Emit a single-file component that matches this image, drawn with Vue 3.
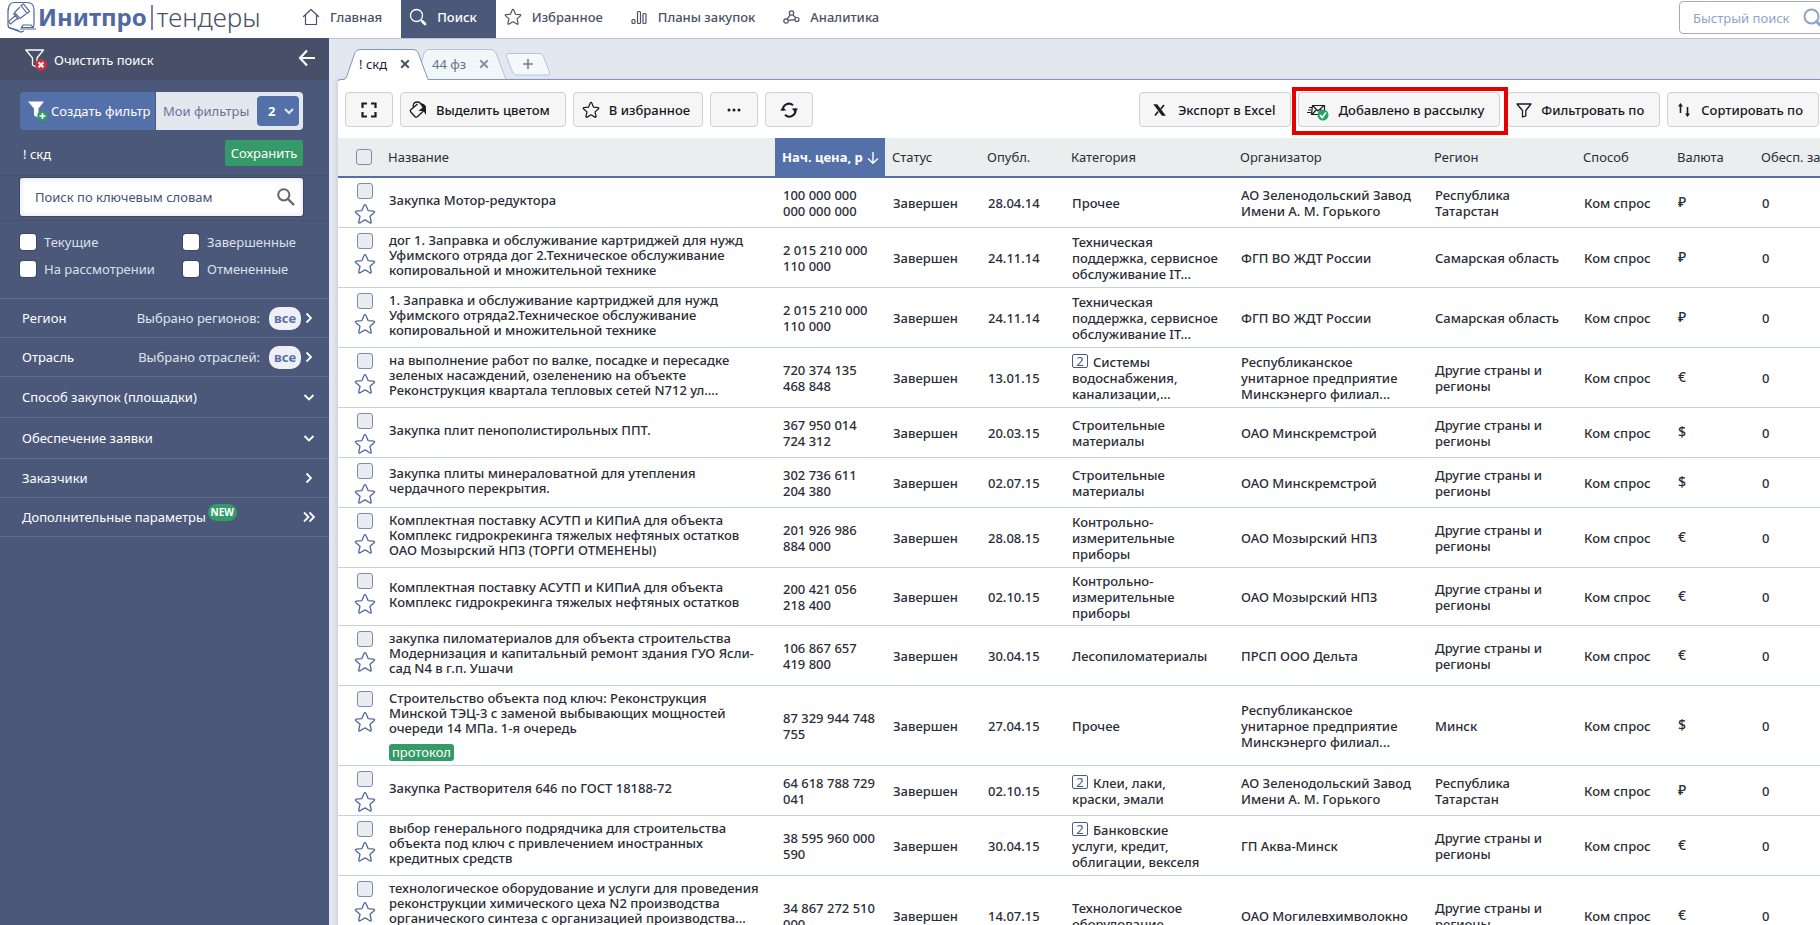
<script setup>
import { ref } from 'vue'

const star = 'M10 1.500q.6 0 .9.800l1.900 4.600 5 .5q1.500.3.400 1.400l-3.700 3.300 1.100 5q.1 1.400-1.200.8L10 15.300l-4.400 2.600q-1.300.6-1.200-.8l1.100-5L1.800 8.800q-1.100-1.100.4-1.400l5-.5 1.900-4.600q.3-.8.900-.8z'

const quickSearch = ref('')
const keywords = ref('')
const statuses = ['Текущие', 'Завершенные', 'На рассмотрении', 'Отмененные']

const groups = [
  { title: 'Регион', note: 'Выбрано регионов:', icon: 'right' },
  { title: 'Отрасль', note: 'Выбрано отраслей:', icon: 'right' },
  { title: 'Способ закупок (площадки)', icon: 'down', tall: true },
  { title: 'Обеспечение заявки', icon: 'down', tall: true },
  { title: 'Заказчики', icon: 'right' },
  { title: 'Дополнительные параметры', icon: 'double', fresh: true }
]

const headers = ['Статус', 'Опубл.', 'Категория', 'Организатор', 'Регион', 'Способ', 'Валюта', 'Обесп. заявки']

const other = 'Другие страны и\nрегионы'
const tatar = 'Республика\nТатарстан'
const zelen = 'АО Зеленодольский Завод\nИмени А. М. Горького'
const energo = 'Республиканское\nунитарное предприятие\nМинскэнерго филиал...'
const tech = 'Техническая\nподдержка, сервисное\nобслуживание IT...'
const control = 'Контрольно-\nизмерительные\nприборы'

const rows = [
  { name: 'Закупка Мотор-редуктора', price: '100 000 000\n000 000 000', date: '28.04.14', cat: 'Прочее', org: zelen, region: tatar, cur: '₽' },
  { name: 'дог 1. Заправка и обслуживание картриджей для нужд\nУфимского отряда дог 2.Техническое обслуживание\nкопировальной и множительной технике', price: '2 015 210 000\n110 000', date: '24.11.14', cat: tech, org: 'ФГП ВО ЖДТ России', region: 'Самарская область', cur: '₽' },
  { name: '1. Заправка и обслуживание картриджей для нужд\nУфимского отряда2.Техническое обслуживание\nкопировальной и множительной технике', price: '2 015 210 000\n110 000', date: '24.11.14', cat: tech, org: 'ФГП ВО ЖДТ России', region: 'Самарская область', cur: '₽' },
  { name: 'на выполнение работ по валке, посадке и пересадке\nзеленых насаждений, озеленению на объекте\nРеконструкция квартала тепловых сетей N712 ул....', price: '720 374 135\n468 848', date: '13.01.15', count: 2, cat: 'Системы\nводоснабжения,\nканализации,...', org: energo, region: other, cur: '€' },
  { name: 'Закупка плит пенополистирольных ППТ.', price: '367 950 014\n724 312', date: '20.03.15', cat: 'Строительные\nматериалы', org: 'ОАО Минскремстрой', region: other, cur: '$' },
  { name: 'Закупка плиты минераловатной для утепления\nчердачного перекрытия.', price: '302 736 611\n204 380', date: '02.07.15', cat: 'Строительные\nматериалы', org: 'ОАО Минскремстрой', region: other, cur: '$' },
  { name: 'Комплектная поставку АСУТП и КИПиА для объекта\nКомплекс гидрокрекинга тяжелых нефтяных остатков\nОАО Мозырский НПЗ (ТОРГИ ОТМЕНЕНЫ)', price: '201 926 986\n884 000', date: '28.08.15', cat: control, org: 'ОАО Мозырский НПЗ', region: other, cur: '€' },
  { name: 'Комплектная поставку АСУТП и КИПиА для объекта\nКомплекс гидрокрекинга тяжелых нефтяных остатков', price: '200 421 056\n218 400', date: '02.10.15', cat: control, org: 'ОАО Мозырский НПЗ', region: other, cur: '€' },
  { name: 'закупка пиломатериалов для объекта строительства\nМодернизация и капитальный ремонт здания ГУО Ясли-\nсад N4 в г.п. Ушачи', price: '106 867 657\n419 800', date: '30.04.15', cat: 'Лесопиломатериалы', org: 'ПРСП ООО Дельта', region: other, cur: '€' },
  { name: 'Строительство объекта под ключ: Реконструкция\nМинской ТЭЦ-3 с заменой выбывающих мощностей\nочереди 14 МПа. 1-я очередь', tag: 'протокол', price: '87 329 944 748\n755', date: '27.04.15', cat: 'Прочее', org: energo, region: 'Минск', cur: '$' },
  { name: 'Закупка Растворителя 646 по ГОСТ 18188-72', price: '64 618 788 729\n041', date: '02.10.15', count: 2, cat: 'Клеи, лаки,\nкраски, эмали', org: zelen, region: tatar, cur: '₽' },
  { name: 'выбор генерального подрядчика для строительства\nобъекта под ключ с привлечением иностранных\nкредитных средств', price: '38 595 960 000\n590', date: '30.04.15', count: 2, cat: 'Банковские\nуслуги, кредит,\nоблигации, векселя', org: 'ГП Аква-Минск', region: other, cur: '€' },
  { name: 'технологическое оборудование и услуги для проведения\nреконструкции химического цеха N2 производства\nорганического синтеза с организацией производства...', tag: 'протокол', price: '34 867 272 510\n000', date: '14.07.15', cat: 'Технологическое\nоборудование', org: 'ОАО Могилевхимволокно', region: other, cur: '€' }
]
</script>

<template>
  <div class="app">
    <header class="top">
      <a href="#" class="logo">
        <svg class="logo-mark" viewBox="0 0 30 32" fill="none" stroke="#4f66a0" stroke-width="1.2">
          <path d="M7 1.500h13q7 0 7 7v15q0 2-2 3M1 7.500V24q0 3 3 3.500l10 3.500 3-1M1 11l1-6q1-3 5-3.500" />
          <path d="M14 4.500l2.500-1.500 6 7.500-2.500 2zM13 6L7.500 11.500l5.500 6 6-4.500M6.500 12.500l5 6M8.500 14.500L1.500 20.500l2 2.500 7.500-6" />
          <path d="M14.500 26.500l1.500-2.500h8l2 2.500zM13 28h16M2 26.500l10 3" />
        </svg>
        <span class="logo-bold">Инитпро</span><span class="logo-bar"></span><span class="logo-thin">тендеры</span>
      </a>
      <nav class="nav">
        <a href="#">
          <svg class="i18" viewBox="0 0 18 18" fill="none" stroke="currentColor" stroke-width="1.2"><path d="M1.500 8.500L9 1.500l7.500 7M3.500 7v9.500h11V7" stroke-linejoin="round" stroke-linecap="round" /></svg>
          Главная
        </a>
        <a href="#" class="on">
          <svg class="i18" viewBox="0 0 18 18" fill="none" stroke="currentColor"><circle cx="7.500" cy="7.500" r="6" stroke-width="1.300" /><path d="M12 12l2 2" stroke-width="1.300" /><path d="M13.500 13.500l2.500 2.500" stroke-width="2.800" stroke-linecap="round" /></svg>
          Поиск
        </a>
        <a href="#">
          <svg class="i18" viewBox="0 0 20 20" fill="none" stroke="currentColor" stroke-width="1.300" stroke-linejoin="round"><path :d="star" /></svg>
          Избранное
        </a>
        <a href="#">
          <svg class="i18" viewBox="0 0 18 18" fill="none" stroke="currentColor" stroke-width="1.200"><rect x="2" y="11.500" width="3" height="4" rx="1" /><rect x="7.500" y="3.500" width="3" height="12" rx="1" /><rect x="13" y="5.500" width="3" height="10" rx="1" /></svg>
          Планы закупок
        </a>
        <a href="#">
          <svg class="i18" viewBox="0 0 18 18" fill="none" stroke="currentColor" stroke-width="1.200"><circle cx="4" cy="13" r="2.200" /><circle cx="9.500" cy="5" r="2.200" /><circle cx="15" cy="11.500" r="2" /><path d="M5.200 11.200l3-4.300M10.900 6.800l2.900 3.200M6.200 12.300l6.800-.700" /></svg>
          Аналитика
        </a>
      </nav>
      <div class="quick">
        <input v-model="quickSearch" type="text" aria-label="Быстрый поиск" placeholder="Быстрый поиск" />
        <svg class="quick-icon" viewBox="0 0 20 20" fill="none" stroke="#8ea3cd" stroke-width="2"><circle cx="8.500" cy="8.500" r="7" /><path d="M13.500 13.500l4 4" stroke-width="3" stroke-linecap="round" /></svg>
      </div>
    </header>

    <div class="main">
      <aside class="side">
        <div class="side-head">
          <button class="clear" type="button">
            <svg class="i22" viewBox="0 0 22 22" fill="none"><path d="M.8 1h17.700l-6.500 8v9.500L7.500 16V9z" stroke="#fff" stroke-width="1.300" stroke-linejoin="round" /><circle cx="16" cy="15.800" r="5.800" fill="#d02f3d" /><path d="M13.600 13.400l4.800 4.800M18.400 13.400l-4.800 4.800" stroke="#fff" stroke-width="2" /></svg>
            Очистить поиск
          </button>
          <button class="back" type="button" aria-label="Свернуть">
            <svg class="i18" viewBox="0 0 18 18" fill="none" stroke="#fff" stroke-width="2.200"><path d="M17 9H2.500M9 1.500L2 9l7 7.500" /></svg>
          </button>
        </div>

        <div class="filters">
          <button class="create" type="button">
            <svg class="i22" viewBox="0 0 22 22"><path d="M1 1.500h16l-5.500 7V18L7 15.500v-7z" fill="#fff" /><circle cx="15.500" cy="16" r="5.300" fill="#2f9a66" /><path d="M12.500 16h6M15.500 13v6" stroke="#fff" stroke-width="1.700" /></svg>
            Создать фильтр
          </button>
          <button class="mine" type="button">
            Мои фильтры
            <span class="chip">2 <svg class="i8" viewBox="0 0 8 8" fill="none" stroke="#dde4f2" stroke-width="2"><path d="M0 2l4 4 4-4" /></svg></span>
          </button>
        </div>

        <div class="current">
          <span>! скд</span>
          <button class="save" type="button">Сохранить</button>
        </div>

        <div class="keywords">
          <input v-model="keywords" type="text" aria-label="Ключевые слова" placeholder="Поиск по ключевым словам" />
          <svg class="key-icon" viewBox="0 0 18 18" fill="none" stroke="#666" stroke-width="2"><circle cx="6.800" cy="6.800" r="5.600" /><path d="M11 11l6 6" stroke-width="2.400" /></svg>
        </div>

        <div class="states">
          <label v-for="s in statuses" :key="s"><input type="checkbox" />{{ s }}</label>
        </div>

        <div class="groups">
          <button v-for="g in groups" :key="g.title" class="group" :class="{ tall: g.tall }" type="button">
            <span>{{ g.title }}</span>
            <sup v-if="g.fresh" class="new">NEW</sup>
            <span v-if="g.note" class="note">{{ g.note }}</span>
            <span v-if="g.note" class="all">все</span>
            <svg class="chev" :class="{ solo: !g.note }" viewBox="0 0 12 12" fill="none" stroke="#fff" stroke-width="1.800">
              <path v-if="g.icon === 'right'" d="M3.500 1.500L8 6l-4.500 4.500" />
              <path v-else-if="g.icon === 'down'" d="M1.500 4L6 8.500 10.500 4" />
              <path v-else d="M1 1.500L5.500 6 1 10.500M6.500 1.500L11 6l-4.500 4.500" />
            </svg>
          </button>
        </div>
      </aside>

      <section class="work">
        <div class="tabs">
          <svg class="tab-shape" viewBox="0 0 220 42">
            <path d="M85 40.500L92 14q1.500-3.500 5-3.500h62q3.500 0 5 3.500l10 26.500" fill="#f1f6f9" stroke="#b3c3da" />
            <path d="M6 42v-1.500h5q2.500 0 3.500-2.500L23 13.500q1.500-3 5-3h53q4 0 5 3l10 27V42z" fill="#fff" />
            <path d="M6 42q1-1.500 3-1.500h2q2.500 0 3.500-2.500L23 13.500q1.500-3 5-3h53q4 0 5 3l10 27h124" fill="none" stroke="#7f96bf" />
            <path d="M174.500 17.500q-1-3 2-3h31q3 0 4 3l6 15.500q1 3-2 3h-31q-3 0-4-3z" fill="#f5f8fb" stroke="#b3c3e0" />
          </svg>
          <div class="tab-items">
            <button type="button" class="tab">! скд</button>
            <button type="button" class="x" aria-label="Закрыть ! скд"><svg class="i8" viewBox="0 0 8 8" stroke="currentColor" stroke-width="2"><path d="M.2.2l7.600 7.600M7.800.2L.2 7.800" /></svg></button>
            <button type="button" class="tab dim second">44 фз</button>
            <button type="button" class="x dim" aria-label="Закрыть 44 фз"><svg class="i8" viewBox="0 0 8 8" stroke="currentColor" stroke-width="2"><path d="M.2.2l7.600 7.600M7.800.2L.2 7.800" /></svg></button>
            <button type="button" class="x add" aria-label="Новая вкладка"><svg class="i10" viewBox="0 0 10 10" stroke="#777b84" stroke-width="1.600"><path d="M5 0v10M0 5h10" /></svg></button>
          </div>
        </div>

        <div class="panel">
          <div class="tools">
            <button type="button" class="sq" aria-label="Во весь экран"><svg class="i16" viewBox="0 0 16 16" fill="none" stroke="#1b1d22" stroke-width="2.200"><path d="M1.500 6V1.500H6M10 1.500h4.500V6M14.500 10v4.500H10M6 14.500H1.500V10" /></svg></button>
            <button type="button">
              <svg class="i18" viewBox="0 0 18 18" fill="none" stroke="#1b1d22" stroke-width="1.300"><path d="M8.500 3L1.800 8.700q-1.200 1.100 0 2.300l4 4.500q1.200 1.200 2.500.2l6.200-5.700" /><path d="M4.300 6.300V4.500q0-3.500 4-3.500 2 0 3 1" /><path d="M10 1.500q6.500 1 7 4.500v8l-2.500-4H9.500l4-3.500z" fill="#1b1d22" stroke="none" /></svg>
              Выделить цветом
            </button>
            <button type="button" class="fav">
              <svg class="i18" viewBox="0 0 20 20" fill="none" stroke="#1b1d22" stroke-width="1.400" stroke-linejoin="round"><path :d="star" /></svg>
              В избранное
            </button>
            <button type="button" class="sq" aria-label="Ещё"><svg class="i14" viewBox="0 0 14 14" fill="#1b1d22"><circle cx="2" cy="7" r="1.500" /><circle cx="7" cy="7" r="1.500" /><circle cx="12" cy="7" r="1.500" /></svg></button>
            <button type="button" class="sq" aria-label="Обновить"><svg class="i18" viewBox="0 0 18 18" fill="none" stroke="#1b1d22" stroke-width="2"><path d="M3 9.500a6 6 0 0 1 10-5.200M15 7.500a6 6 0 0 1-10 6.200" /><path d="M0 9.500h6.200L3 6zM18 7.500h-6.200L15 11.500z" fill="#1b1d22" stroke="none" /></svg></button>

            <button type="button" class="push">
              <svg class="i18" viewBox="0 0 18 18" fill="none" stroke="#1b1d22"><path d="M4 4h1.800l7.400 10h-1.800z" stroke-width="1.700" /><path d="M13 4L9.800 8M7.200 10.500L4 14.500" stroke-width="1.700" /></svg>
              Экспорт в Excel
            </button>
            <span class="marked">
              <button type="button">
                <svg class="i22" viewBox="0 0 22 22" fill="none" stroke="#1b1d22"><path d="M5.500 6.500h12v9h-13zM5.500 6.500l5.500 5.500 6-5.500M5 15.500l4.500-5M16.500 15.500l-3-5" stroke-width="1.200" /><path d="M2 8.500h3M1 11h3.500M0 13.500h4" /><circle cx="16" cy="16" r="5.500" fill="#27a06a" stroke="none" /><path d="M13 16l2.200 2.500L19 13.500" stroke="#fff" stroke-width="1.800" /></svg>
                Добавлено в рассылку
              </button>
            </span>
            <button type="button">
              <svg class="i16" viewBox="0 0 16 16" fill="none" stroke="#1b1d22" stroke-width="1.300" stroke-linejoin="round"><path d="M1 2h14L9.800 8.500v5.300L6.500 15V8.500z" /></svg>
              Фильтровать по
            </button>
            <button type="button">
              <svg class="i16" viewBox="0 0 16 16" fill="none" stroke="#1b1d22" stroke-width="1.600"><path d="M4.500 11V2.500M11.500 5v8.500" /><path d="M2 4.500L4.500 1 7 4.500zM9 11.500l2.500 3.500 2.500-3.500z" fill="#1b1d22" stroke="none" /></svg>
              Сортировать по
            </button>
          </div>

          <table class="grid">
            <colgroup>
              <col class="c-check" /><col class="c-name" /><col class="c-price" /><col class="c-status" /><col class="c-date" /><col class="c-cat" /><col class="c-org" /><col class="c-region" /><col class="c-way" /><col class="c-cur" /><col />
            </colgroup>
            <thead>
              <tr>
                <th class="check"><input type="checkbox" aria-label="Выбрать все" /></th>
                <th>Название</th>
                <th class="price">Нач. цена, р <svg class="i12" viewBox="0 0 12 12" fill="none" stroke="#fff" stroke-width="1.400"><path d="M6 0v11M1 6.500l5 4.700 5-4.700" /></svg></th>
                <th v-for="h in headers" :key="h">{{ h }}</th>
              </tr>
            </thead>
            <tbody>
              <tr v-for="(r, i) in rows" :key="i">
                <td class="check">
                  <div class="marks">
                    <input type="checkbox" :aria-label="'Выбрать: ' + r.name" />
                    <button type="button" :aria-label="'В избранное: ' + r.name"><svg class="i20" viewBox="1 1 18 18" fill="none" stroke="#54699f" stroke-width="1.200" stroke-linejoin="round"><path :d="star" /></svg></button>
                  </div>
                </td>
                <td class="name" :class="{ tagged: r.tag }">{{ r.name }}<div v-if="r.tag"><span class="tag">{{ r.tag }}</span></div></td>
                <td>{{ r.price }}</td>
                <td>Завершен</td>
                <td>{{ r.date }}</td>
                <td><span v-if="r.count" class="count">{{ r.count }}</span>{{ r.cat }}</td>
                <td>{{ r.org }}</td>
                <td>{{ r.region }}</td>
                <td>Ком спрос</td>
                <td class="cur">{{ r.cur }}</td>
                <td>0</td>
              </tr>
            </tbody>
          </table>
        </div>
      </section>
    </div>
  </div>
</template>

<style>
body { overflow: hidden; }
</style>

<style scoped>
.app { height: 100vh; display: flex; flex-direction: column; overflow: hidden; background: #e3e7ef; color: #2a2d36; font: 13px/16px "Noto Sans", "Open Sans", sans-serif; }
.app *, .app *::before, .app *::after { box-sizing: border-box; }
button, input { font: inherit; color: inherit; margin: 0; }
button { border: 0; padding: 0; background: none; display: flex; align-items: center; white-space: nowrap; }
svg { display: block; flex: none; overflow: visible; }
.i8 { width: 8px; height: 8px; }
.i10 { width: 10px; height: 10px; }
.i12 { width: 12px; height: 12px; }
.i14 { width: 14px; height: 14px; }
.i16 { width: 16px; height: 16px; }
.i18 { width: 18px; height: 18px; }
.i20 { width: 20px; height: 20px; }
.i22 { width: 22px; height: 22px; }

.top { flex: none; height: 38px; display: flex; background: #fff; overflow: hidden; }
.logo { width: 294px; padding-left: 7px; display: flex; align-items: center; text-decoration: none; font-size: 24px; line-height: 34px; color: #4b5167; height: 34px; }
.logo-mark { width: 30px; height: 32px; }
.logo-bold { margin-left: 1px; font-weight: 700; color: #5069a3; }
.logo-bar { width: 2px; height: 25px; margin: 0 4px; background: #7b829a; }
.logo-thin { font-size: 26px; font-weight: 300; }
.nav { display: flex; font-weight: 500; }
.nav a { display: flex; align-items: center; gap: 10px; padding: 0 19px 4px 8px; color: #4a5068; text-decoration: none; }
.nav a.on { background: #4c5879; color: #fff; }
.quick { flex: none; position: relative; width: 161px; height: 33px; margin: 1px -20px 0 auto; }
.quick input { width: 100%; height: 33px; border: 1px solid #a3acc6; border-radius: 4px; padding: 0 40px 0 13px; background: #fff; outline: 0; }
.quick input::placeholder { color: #8ea3cd; opacity: 1; }
.quick-icon { position: absolute; left: 124px; top: 7px; width: 20px; height: 20px; }

.main { flex: 1; min-height: 0; display: flex; }
.side { flex: none; width: 329px; background: #4c5879; color: #fff; }
.side-head { height: 42px; padding: 0 13px 2px 25px; display: flex; justify-content: space-between; align-items: center; background: #485069; }
.clear { gap: 7px; padding-top: 3px; }
.filters { margin: 12px 26px 0 20px; height: 38px; display: flex; border-radius: 4px; overflow: hidden; }
.create { width: 135px; padding-left: 7px; gap: 2px; background: #5470a9; }
.mine { flex: 1; margin-left: 1px; padding: 0 4px 0 7px; justify-content: space-between; background: #e3e8ef; color: #66749a; }
.chip { width: 42px; height: 30px; padding: 0 6px 0 11px; display: flex; align-items: center; justify-content: space-between; border-radius: 4px; background: #5470a9; color: #fff; font-weight: 700; }
.current { height: 46px; padding: 10px 26px 0 23px; display: flex; justify-content: space-between; align-items: flex-start; line-height: 28px; border-bottom: 1px solid #485270; }
.save { height: 26px; width: 78px; justify-content: center; border-radius: 2px; background: #349a67; }
.keywords { position: relative; height: 45px; padding: 2px 26px 0 20px; border-bottom: 1px solid #485270; }
.keywords input { width: 100%; height: 38px; padding: 0 40px 0 15px; border: 0; border-radius: 3px; background: #fff; box-shadow: 0 0 0 1px #3c4660, inset 0 0 6px #dde1ea; outline: 0; }
.keywords input::placeholder { color: #44527a; opacity: 1; }
.key-icon { position: absolute; right: 34px; top: 12px; width: 18px; height: 18px; }
.states { height: 77px; padding: 12px 20px 0; display: grid; grid-template-columns: 163px 1fr; grid-auto-rows: 27px; color: #dbe0ea; }
.states label { display: flex; gap: 8px; height: 18px; align-items: center; }
.states input { appearance: none; width: 16px; height: 16px; border-radius: 3px; background: #fff; box-shadow: 0 0 0 1px #3c4660; }
.groups { border-top: 1px solid #5f6d8c; }
.group { width: 100%; height: 39px; padding: 0 14px 0 22px; border-bottom: 1px solid #5f6d8c; text-align: left; }
.group.tall { height: 41px; }
.note { margin-left: auto; color: #e0e4ee; }
.all { width: 32px; height: 23px; margin: 0 2px 0 9px; border-radius: 10px; background: #eef0f6; color: #5470a9; font-weight: 700; line-height: 22px; text-align: center; }
.chev { width: 12px; height: 12px; }
.chev.solo { margin-left: auto; }
.new { align-self: flex-start; margin: 6px 0 0 2px; width: 29px; height: 17px; border-radius: 9px; background: #349a67; font-size: 10px; line-height: 17px; font-weight: 700; text-align: center; }

.work { flex: 1; min-width: 0; display: flex; flex-direction: column; border-top: 1px solid #b9c4da; padding-left: 9px; }
.tabs { position: relative; z-index: 1; flex: none; height: 41px; border-bottom: 1px solid #7f96bf; }
.tab-shape { position: absolute; left: -6px; top: 0; width: 220px; height: 42px; }
.tab-items { position: relative; display: flex; align-items: center; height: 41px; padding: 14px 0 5px 21px; }
.tab { width: 42px; color: #1d2233; }
.tab.second { margin-left: 23px; width: 48px; }
.tab.dim { color: #66718c; }
.x { color: #4a5166; }
.x.dim { color: #8a91a3; }
.x.add { margin-left: 35px; }
.panel { flex: 1; min-height: 0; overflow: hidden; background: #fff; box-shadow: -2px 0 4px #c9d0de; }
.tools { display: flex; gap: 7px; padding: 12px 1px 11px 7px; font-weight: 500; }
.tools button { height: 35px; padding: 0 15px 0 8px; gap: 9px; border: 1px solid #d0d0d2; border-radius: 4px; background: #f6f6f6; color: #16181e; }
.tools .fav { padding-right: 12px; }
.tools .sq { width: 48px; padding: 0; justify-content: center; }
.tools .push { margin-left: auto; padding-left: 11px; }
.marked { position: relative; }
.marked::after { content: ""; position: absolute; inset: -5px -8px -8px -6px; border: 4px solid #e60000; pointer-events: none; z-index: 1; }

.grid { width: 100%; table-layout: fixed; border-collapse: separate; border-spacing: 0; }
.c-check { width: 43px; }
.c-name { width: 394px; }
.c-price { width: 110px; }
.c-status { width: 95px; }
.c-date { width: 84px; }
.c-cat { width: 169px; }
.c-org { width: 194px; }
.c-region { width: 149px; }
.c-way { width: 94px; }
.c-cur { width: 84px; }
th { height: 40px; padding: 0 0 0 7px; background: #eaeeef; border-bottom: 2px solid #5470a9; font-weight: 400; text-align: left; white-space: nowrap; }
th.price { background: #5470a9; color: #fff; font-weight: 700; }
th .i12 { display: inline-block; vertical-align: -2px; margin-left: 1px; }
td { padding: 5px 0 4px 8px; border-bottom: 1px solid #c6d0e0; vertical-align: middle; white-space: pre-line; font-weight: 500; }
td.name { padding-bottom: 9px; line-height: 15px; }
td.tagged { padding-bottom: 4px; }
.tag { display: block; width: 65px; height: 17px; margin-top: 8px; border-radius: 3px; background: #349a67; color: #fff; font-weight: 400; line-height: 16px; text-align: center; }
td.check { padding: 5px 0 3px 17px; vertical-align: top; }
th.check { padding-left: 18px; }
.check input { appearance: none; display: block; width: 16px; height: 16px; border: 1px solid #7f8ca8; border-radius: 3px; background: #e9edf3; }
.marks { display: flex; flex-direction: column; gap: 5px; height: 41px; }
.marks input { margin-left: 2px; }
td.cur { padding-bottom: 7px; font-size: 14px; }
.count { display: inline-block; width: 16px; height: 14px; margin-right: 5px; border: 1px solid #4a5a80; border-radius: 2px; color: #4a5a80; font-weight: 400; line-height: 12px; text-align: center; vertical-align: 1px; }
</style>
